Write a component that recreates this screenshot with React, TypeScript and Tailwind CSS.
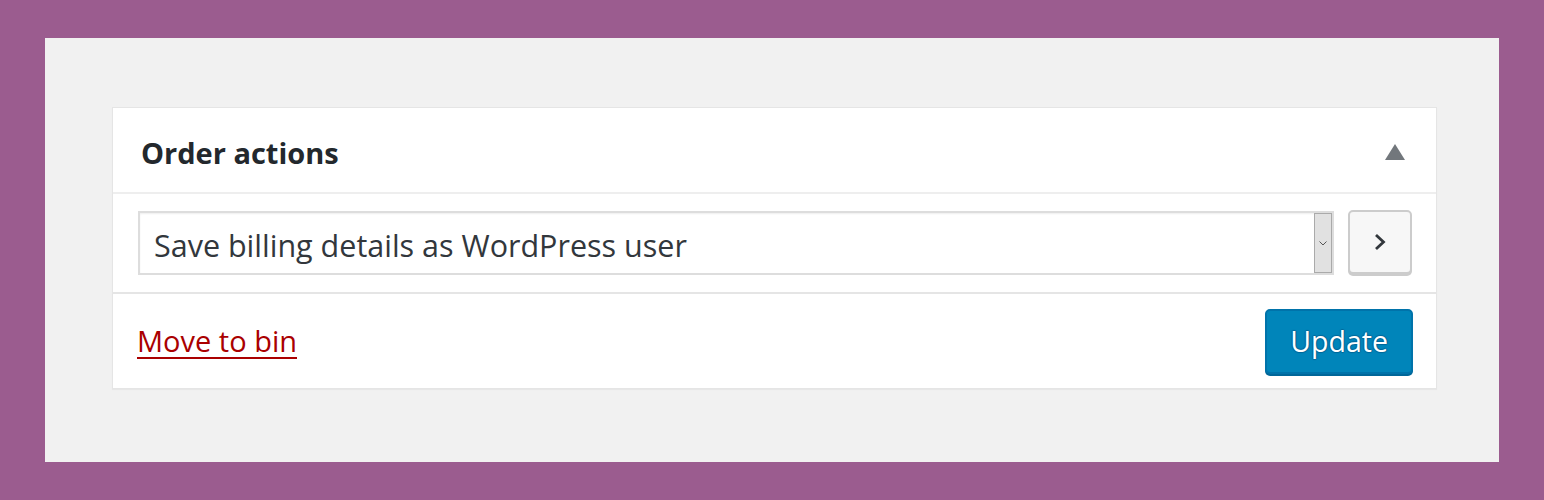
export default function App() {
  return (
    <div className="h-[500px] w-[1544px] bg-[#9b5c8f] px-[45px] pt-[38px] pb-[38px] font-['Open_Sans',sans-serif]">
      <div className="h-[424px] bg-[#f1f1f1] pl-[67px] pr-[62px] pt-[69px]">
        {/* Order actions metabox */}
        <div className="border border-[#e5e5e5] bg-white shadow-[0_1px_1px_rgba(0,0,0,0.04)]">
          <div className="flex h-[86px] items-center justify-between border-b-2 border-[#eeeeee] pl-[28px] pr-[31px]">
            <h2 className="mt-[5px] text-[29px] font-bold text-[#23282d]">Order actions</h2>
            <svg width="20" height="16" viewBox="0 0 20 16" className="mt-[3px]">
              <polygon points="10,0 20,16 0,16" fill="#72777c" />
            </svg>
          </div>

          <div className="flex h-[100px] items-center gap-[14px] border-b-2 border-[#e5e5e5] pl-[25px] pr-[24px]">
            <div className="flex h-[64px] flex-1 items-stretch border-2 border-[#dddddd] bg-white shadow-[inset_0_1px_2px_rgba(0,0,0,0.07)]">
              <span className="flex flex-1 items-center pl-[14px] pt-[6px] text-[30.5px] text-[#32373c]">
                Save billing details as WordPress user
              </span>
              <span className="flex w-[18px] items-center justify-center border border-[#aaaaaa] bg-[#e1e1e1]">
                <svg width="8" height="5" viewBox="0 0 8 5">
                  <path d="M0.5 0.5 L4 4 L7.5 0.5" fill="none" stroke="#555" strokeWidth="1" />
                </svg>
              </span>
            </div>
            <button className="mb-[2px] flex h-[64px] w-[64px] items-center justify-center rounded-[5px] border-2 border-[#cccccc] bg-[#f7f7f7] shadow-[0_2px_0_#cccccc]">
              <svg width="12" height="18" viewBox="0 0 12 18">
                <path d="M2 2 L9.5 9 L2 16" fill="none" stroke="#32373c" strokeWidth="2.8" />
              </svg>
            </button>
          </div>

          <div className="flex h-[94px] items-center justify-between pl-[24px] pr-[23px]">
            <a href="#" className="text-[29px] text-[#a00] underline decoration-2 underline-offset-[5px]">
              Move to bin
            </a>
            <button className="h-[65px] rounded-[5px] border-2 border-[#0073aa] bg-[#0085ba] px-[23px] text-[28.5px] text-white shadow-[0_2px_0_#006799] [text-shadow:0_-1px_1px_#006799,1px_0_1px_#006799,0_1px_1px_#006799,-1px_0_1px_#006799]">
              Update
            </button>
          </div>
        </div>
      </div>
    </div>
  );
}
